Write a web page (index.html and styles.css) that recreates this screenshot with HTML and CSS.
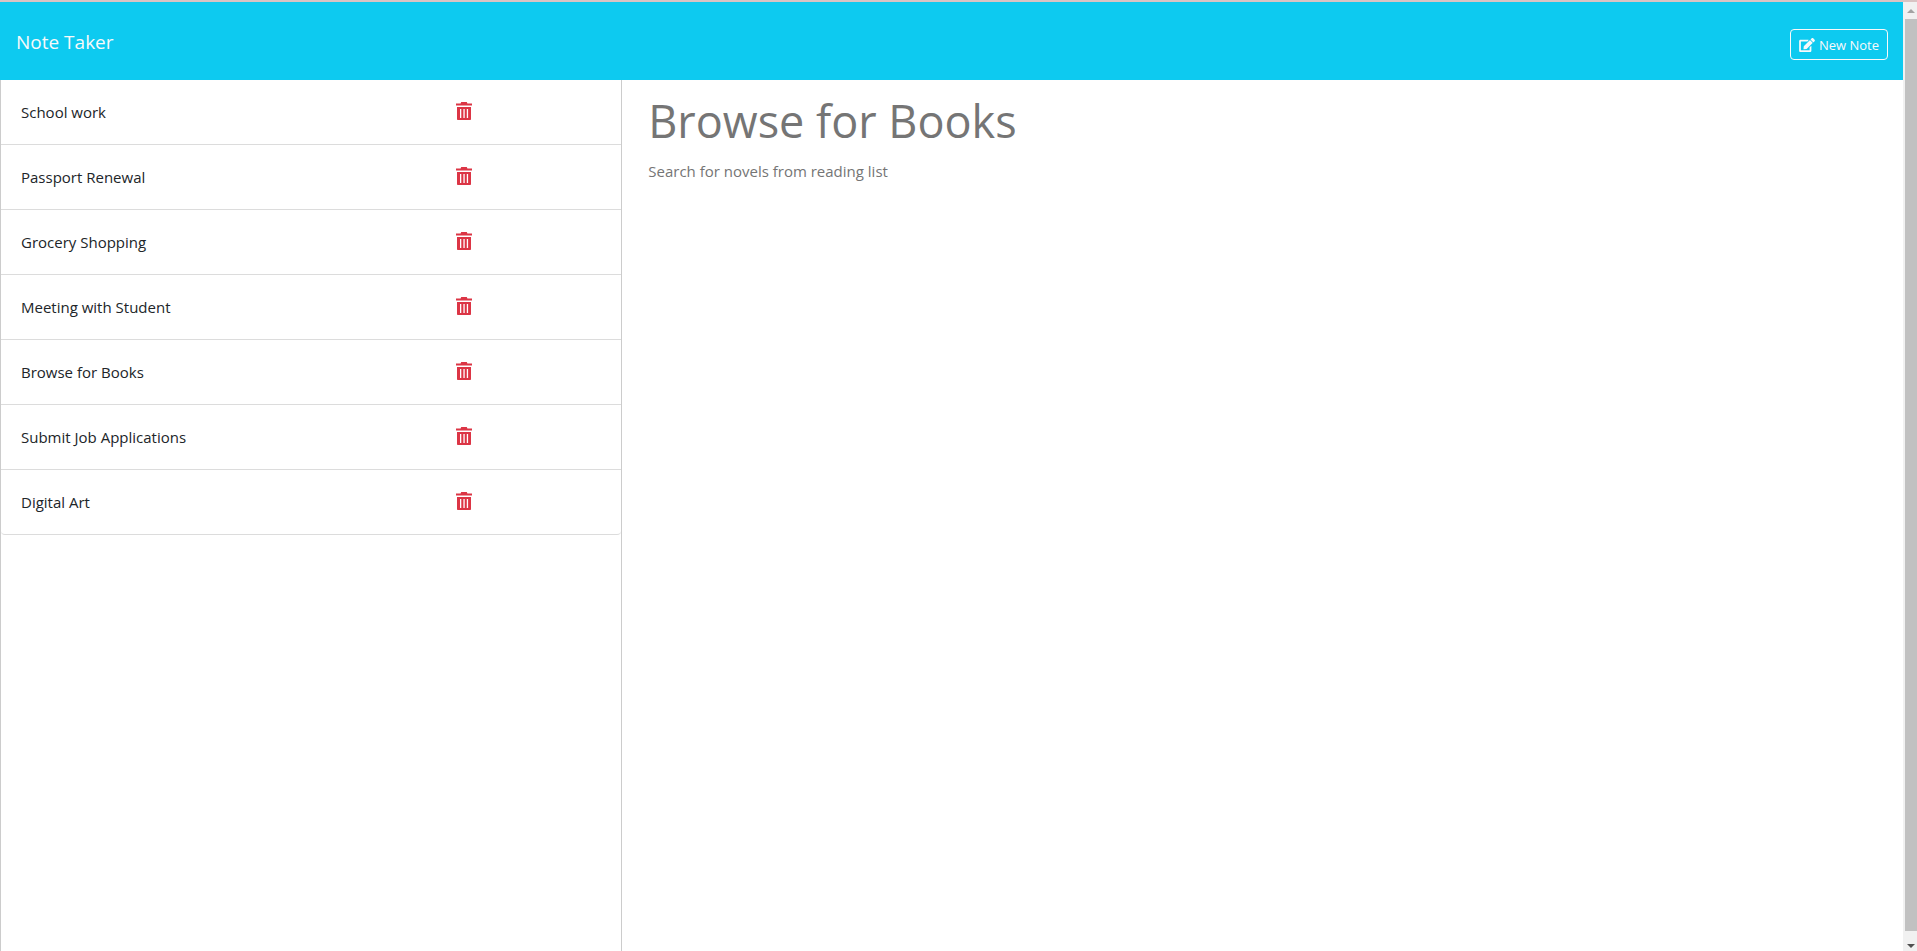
FILE: index.html
```html
<!DOCTYPE html>
<html lang="en">
<head>
<meta charset="utf-8">
<title>Note Taker</title>
<link rel="stylesheet" href="styles.css">
</head>
<body>
<svg class="sprite" aria-hidden="true">
  <symbol id="trash" viewBox="0 0 16 18">
    <path fill-rule="evenodd" d="M0 1.5h4.600L5.200 0h5.600l.6 1.500H16v2H0zM1 5h14v12.200q0 .8-.8.8H1.800q-.8 0-.8-.8zM4 7v9h1.300V7zM7.400 7v9h1.300V7zM10.800 7v9h1.300V7z"/>
  </symbol>
</svg>
<div class="page">
  <nav class="navbar">
    <a class="brand" href="#">Note Taker</a>
    <button class="new-note" type="button">
      <svg class="edit-icon" viewBox="0 0 576 512" aria-hidden="true"><path d="M402.600 83.200l90.200 90.200c3.800 3.800 3.800 10 0 13.800L274.400 405.600l-92.800 10.300c-12.400 1.400-22.900-9.100-21.500-21.500l10.300-92.800L388.800 83.200c3.800-3.800 10-3.800 13.800 0zm162-22.900l-48.800-48.800c-15.200-15.200-39.900-15.200-55.200 0l-35.400 35.400c-3.800 3.800-3.800 10 0 13.800l90.200 90.200c3.800 3.800 10 3.800 13.800 0l35.400-35.400c15.200-15.300 15.200-40 0-55.200zM384 346.200V448H64V128h229.800c3.200 0 6.200-1.300 8.500-3.500l40-40c7.600-7.600 2.200-20.500-8.500-20.500H48C21.500 64 0 85.500 0 112v352c0 26.500 21.500 48 48 48h352c26.500 0 48-21.500 48-48V306.200c0-10.700-12.900-16-20.500-8.500l-40 40c-2.200 2.300-3.500 5.300-3.500 8.500z"/></svg>
      New Note
    </button>
  </nav>
  <main class="content">
    <aside class="sidebar">
      <ul class="notes">
        <li class="note"><a class="note-title" href="#">School work</a><button class="delete" type="button" aria-label="Delete School work"><svg class="trash"><use href="#trash"/></svg></button></li>
        <li class="note"><a class="note-title" href="#">Passport Renewal</a><button class="delete" type="button" aria-label="Delete Passport Renewal"><svg class="trash"><use href="#trash"/></svg></button></li>
        <li class="note"><a class="note-title" href="#">Grocery Shopping</a><button class="delete" type="button" aria-label="Delete Grocery Shopping"><svg class="trash"><use href="#trash"/></svg></button></li>
        <li class="note"><a class="note-title" href="#">Meeting with Student</a><button class="delete" type="button" aria-label="Delete Meeting with Student"><svg class="trash"><use href="#trash"/></svg></button></li>
        <li class="note"><a class="note-title" href="#">Browse for Books</a><button class="delete" type="button" aria-label="Delete Browse for Books"><svg class="trash"><use href="#trash"/></svg></button></li>
        <li class="note"><a class="note-title" href="#">Submit Job Applications</a><button class="delete" type="button" aria-label="Delete Submit Job Applications"><svg class="trash"><use href="#trash"/></svg></button></li>
        <li class="note"><a class="note-title" href="#">Digital Art</a><button class="delete" type="button" aria-label="Delete Digital Art"><svg class="trash"><use href="#trash"/></svg></button></li>
      </ul>
    </aside>
    <section class="editor">
      <input class="field title" type="text" aria-label="Note title" value="Browse for Books" readonly>
      <textarea class="field text" aria-label="Note text" readonly>Search for novels from reading list</textarea>
    </section>
  </main>
</div>
<div class="scrollbar" aria-hidden="true">
  <svg class="arrow up" viewBox="0 0 8 4"><path d="M4 0l4 4H0z"/></svg>
  <div class="thumb"></div>
  <svg class="arrow down" viewBox="0 0 8 4"><path d="M4 4l4-4H0z"/></svg>
</div>
</body>
</html>
```
FILE: styles.css
```css
* {
  box-sizing: border-box;
}

body {
  margin: 0;
  min-height: 100vh;
  display: flex;
  border-top: 2px solid #d9c3c3;
  background: #fff;
  color: #212529;
  font-family: "Open Sans", "Noto Sans", sans-serif;
  font-size: 15px;
  line-height: 24px;
}

.sprite {
  position: absolute;
  width: 0;
  height: 0;
}

.page {
  flex: 1;
  display: flex;
  flex-direction: column;
}

.navbar {
  display: flex;
  align-items: flex-start;
  justify-content: space-between;
  height: 78px;
  padding: 27px 15px 0 16px;
  background: #0dcaf0;
}

.brand {
  color: #f8f9fa;
  font-size: 19px;
  line-height: 26px;
  text-decoration: none;
}

.new-note {
  display: flex;
  align-items: center;
  gap: 4px;
  height: 31px;
  padding: 1px 8px 0;
  border: 1px solid #f8f9fa;
  border-radius: 4px;
  background: transparent;
  color: #f8f9fa;
  font: 13px/21px "Open Sans", "Noto Sans", sans-serif;
}

.edit-icon {
  width: 16px;
  height: 14px;
  fill: currentColor;
}

.content {
  flex: 1;
  display: flex;
}

.sidebar {
  flex: 0 0 32.7%;
  border: solid #ccc;
  border-width: 0 1px;
}

.notes {
  margin: 0;
  padding: 0;
  list-style: none;
}

.note {
  display: grid;
  grid-template-columns: 72.5% 27.5%;
  height: 65px;
  padding: 20px 0 20px 20px;
  border-bottom: 1px solid #dcdcdc;
}

.note:last-child {
  border-radius: 0 0 4px 4px;
}

.note-title {
  color: inherit;
  text-decoration: none;
}

.delete {
  width: 16px;
  height: 22px;
  padding: 0;
  border: 0;
  background: none;
  color: #dc3545;
}

.trash {
  display: block;
  width: 16px;
  height: 18px;
  fill: currentColor;
}

.editor {
  flex: 1;
  display: flex;
  flex-direction: column;
  gap: 3px;
  padding: 4px 26px;
}

.field {
  width: 100%;
  padding: 0;
  border: 0;
  outline: 0;
  background: none;
  color: #757575;
  font-family: inherit;
}

.title {
  height: 72px;
  font-size: 45px;
}

.text {
  flex: 1;
  resize: none;
  font-size: 15px;
  line-height: 24px;
}

.scrollbar {
  flex: 0 0 14px;
  display: flex;
  flex-direction: column;
  align-items: flex-end;
  justify-content: space-between;
  gap: 6px;
  padding: 7px 0 3px;
  background: #f1f1f1;
}

.arrow {
  width: 8px;
  height: 4px;
  margin-right: 2px;
}

.up {
  fill: #a3a3a3;
}

.down {
  margin-top: 7px;
  fill: #505050;
}

.thumb {
  flex: 1;
  width: 12px;
  background: #c1c1c1;
}
```
